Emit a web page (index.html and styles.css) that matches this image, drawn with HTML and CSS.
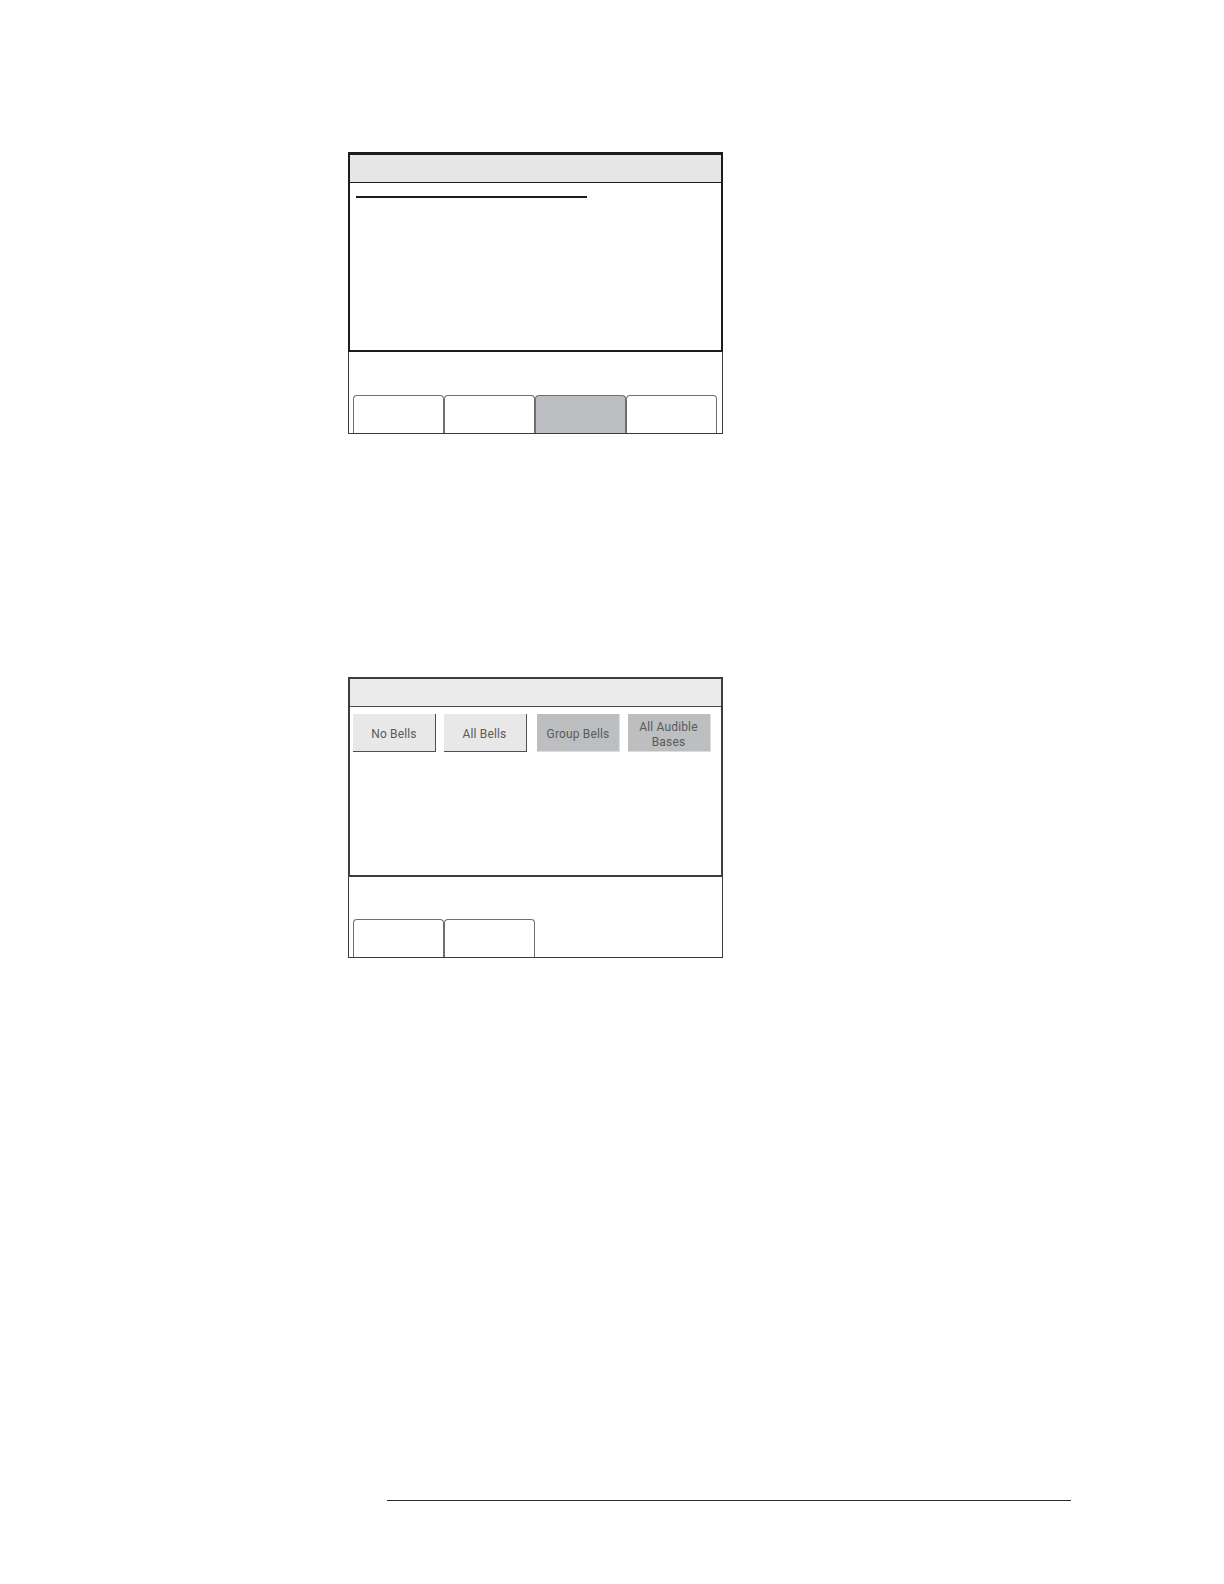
FILE: index.html
```html
<!DOCTYPE html>
<html lang="en">
<head>
<meta charset="utf-8">
<title>Panel screens</title>
<link rel="stylesheet" href="styles.css">
</head>
<body>
<div class="page">
  <section class="screen screen-one">
    <div class="screen-main">
      <div class="screen-header"></div>
      <div class="screen-content">
        <div class="title-rule"></div>
      </div>
    </div>
    <div class="screen-foot">
      <div class="tab"></div>
      <div class="tab"></div>
      <div class="tab tab-active"></div>
      <div class="tab"></div>
    </div>
  </section>

  <section class="screen screen-two">
    <div class="screen-main">
      <div class="screen-header"></div>
      <div class="screen-content">
        <div class="button-row">
          <div class="btn">No Bells</div>
          <div class="btn">All Bells</div>
          <div class="btn btn-gray">Group Bells</div>
          <div class="btn btn-gray">All Audible<br>Bases</div>
        </div>
      </div>
    </div>
    <div class="screen-foot">
      <div class="tab"></div>
      <div class="tab"></div>
    </div>
  </section>

  <div class="footer-rule"></div>
</div>
</body>
</html>
```

FILE: styles.css
```css
html, body {
  margin: 0;
  padding: 0;
  background: #ffffff;
  overflow: hidden;
}

body {
  font-family: Roboto, "Liberation Sans", Arial, sans-serif;
}

.page {
  padding-top: 152px;
  display: flex;
  flex-direction: column;
  align-items: flex-start;
}

.screen {
  width: 375px;
  margin-left: 348px;
  display: flex;
  flex-direction: column;
}

.screen-two {
  margin-top: 243px;
}

.screen-main {
  height: 200px;
  box-sizing: border-box;
  display: flex;
  flex-direction: column;
}

.screen-one .screen-main {
  border: 2px solid #1c1c1c;
  border-top-width: 3px;
}

.screen-two .screen-main {
  border: 2px solid #3d3d3d;
}

.screen-header {
  height: 27px;
  flex: none;
  border-bottom: 1.5px solid #1c1c1c;
}

.screen-one .screen-header {
  background: #e6e6e7;
}

.screen-two .screen-header {
  background: #ebebec;
  border-bottom-color: #4a4a4a;
}

.screen-content {
  flex: 1;
  background: #ffffff;
}

.title-rule {
  margin: 13px 0 0 6px;
  width: 231px;
  height: 2px;
  background: #1c1c1c;
}

.screen-foot {
  height: 82px;
  box-sizing: border-box;
  border: 1px solid #3a3a3a;
  border-top: none;
  padding: 0 0 0 4px;
  display: flex;
  align-items: flex-end;
}

.screen-two .screen-foot {
  height: 81px;
}

.tab {
  width: 91px;
  height: 38px;
  box-sizing: border-box;
  border: 1.5px solid #6e6e6e;
  border-bottom: none;
  border-radius: 4px 4px 0 0;
  background: #ffffff;
}

.tab-active {
  background: #bdbec1;
}

.button-row {
  display: flex;
  gap: 7.5px;
  margin: 7px 0 0 3px;
}

.btn {
  width: 83px;
  height: 38px;
  box-sizing: border-box;
  padding-top: 4px;
  background: #e8e8e9;
  border-right: 1.5px solid #4f4f4f;
  border-bottom: 1.5px solid #4f4f4f;
  display: flex;
  align-items: center;
  justify-content: center;
  text-align: center;
  font-size: 12px;
  line-height: 14.5px;
  color: #5a5a5a;
  letter-spacing: 0.15px;
}

.btn-gray {
  background: #bdbec0;
  border-right: 1px solid #dedede;
  border-bottom: 1px solid #dedede;
}

.btn:not(.btn-gray) + .btn-gray {
  margin-left: 3px;
}

.footer-rule {
  margin-top: 542px;
  margin-left: 387px;
  width: 684px;
  height: 1px;
  background: #2a2a2a;
}
```
